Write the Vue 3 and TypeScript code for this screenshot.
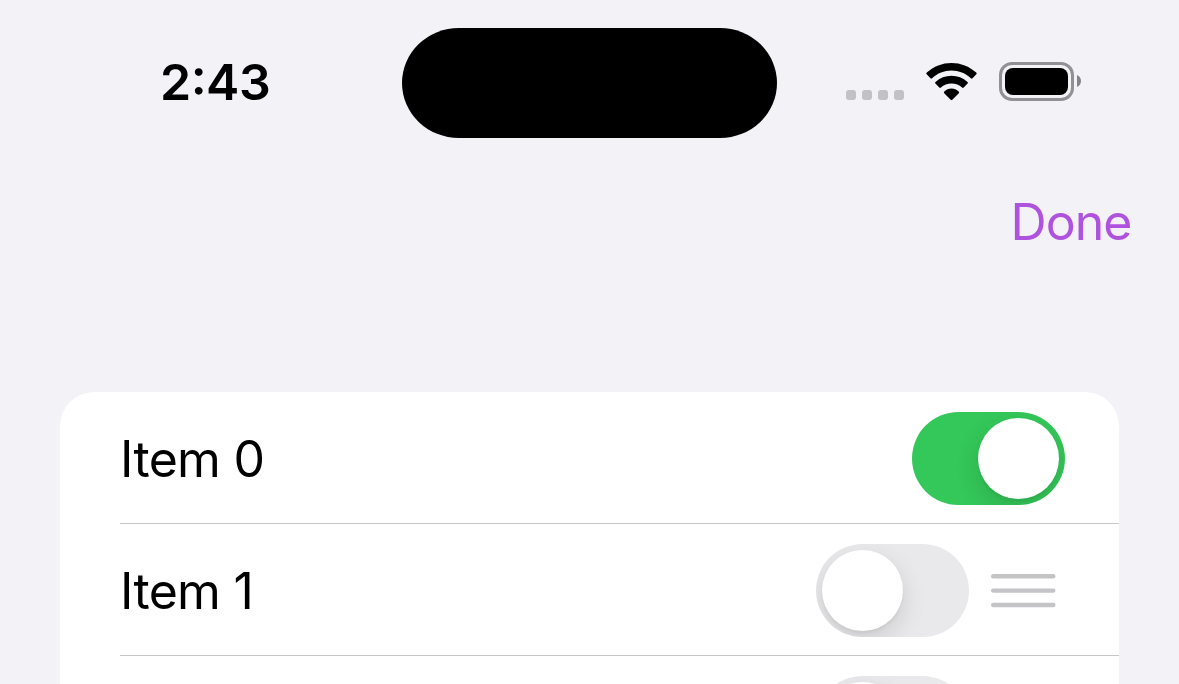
<script setup lang="ts">
import { ref } from 'vue'

interface Item {
  id: number
  label: string
  enabled: boolean
  movable: boolean
}

const items = ref<Item[]>([
  { id: 0, label: 'Item 0', enabled: true, movable: false },
  { id: 1, label: 'Item 1', enabled: false, movable: true },
  { id: 2, label: '', enabled: false, movable: true },
])
</script>

<template>
  <div class="screen">
    <header class="status">
      <div class="time">2:43</div>
      <div class="island" />
      <div class="indicators">
        <div class="signal">
          <i v-for="n in 4" :key="n" />
        </div>
        <svg class="wifi" viewBox="0 0 51 38" aria-hidden="true">
          <path d="M.8 9.6C7.6 3.3 16.2 0 25.5 0s17.9 3.3 24.7 9.6q.9.8.1 1.7l-3.8 3.9q-.8.8-1.6.1C39.6 10.4 32.8 7.6 25.5 7.6S11.4 10.4 6.1 15.3q-.8.7-1.6-.1L.7 11.3q-.8-.9.1-1.7z" />
          <path d="M9.5 18.9C13.9 14.9 19.4 12.7 25.5 12.7s11.6 2.2 16 6.2q.9.8.1 1.7l-3.9 3.9q-.8.8-1.6.1C33.2 22 29.6 20.5 25.5 20.5S17.8 22 14.9 24.6q-.8.7-1.6-.1l-3.9-3.9q-.8-.9.1-1.7z" />
          <path d="M18.3 28.5c2-1.9 4.5-2.9 7.2-2.9s5.2 1 7.2 2.9q.9.8.1 1.7l-6.5 6.6q-.8.8-1.6 0l-6.5-6.6q-.8-.9.1-1.7z" />
        </svg>
        <div class="battery">
          <div class="cell"><div class="charge" /></div>
          <svg class="nub" viewBox="0 0 4 12" aria-hidden="true">
            <path d="M0 0C2.4 1 4 3.3 4 6S2.4 11 0 12z" />
          </svg>
        </div>
      </div>
    </header>

    <nav class="toolbar">
      <button class="done" type="button">Done</button>
    </nav>

    <ul class="list">
      <li v-for="item in items" :key="item.id" class="row">
        <span class="label">{{ item.label }}</span>
        <button
          class="switch"
          :class="{ on: item.enabled }"
          type="button"
          role="switch"
          :aria-checked="item.enabled"
          @click="item.enabled = !item.enabled"
        >
          <span class="knob" />
        </button>
        <svg v-if="item.movable" class="handle" viewBox="0 0 65 34" aria-hidden="true">
          <path d="M2.2 2.3H62.3M2.2 16.6H62.3M2.2 31H62.3" />
        </svg>
      </li>
    </ul>
  </div>
</template>

<style>
body {
  margin: 0;
  background: #f2f2f7;
}
</style>

<style scoped>
.screen {
  box-sizing: border-box;
  height: 684px;
  overflow: hidden;
  background: #f2f2f7;
  color: #000;
  font-family: Inter, 'Liberation Sans', sans-serif;
  font-size: 50px;
}
button {
  margin: 0;
  padding: 0;
  border: 0;
  font: inherit;
}
.status {
  display: grid;
  grid-template-columns: 401.7px 375.5px 1fr;
  align-items: center;
  height: 165.5px;
}
.time {
  padding: 0 0 2px 160px;
  font-weight: 600;
  line-height: 60px;
  letter-spacing: -0.5px;
  font-feature-settings: 'case' 1, 'calt' 1;
}
.island {
  height: 110.5px;
  border-radius: 58px / 56px;
  background: #000;
}
.indicators {
  display: flex;
  align-items: center;
  height: 40px;
  padding: 0 0 2px 69px;
}
.signal {
  display: flex;
  align-self: flex-end;
  gap: 6px;
  margin: 0 22px 2px 0;
}
.signal i {
  width: 10px;
  height: 10px;
  border-radius: 3px;
  background: #c2c1c6;
}
.wifi {
  width: 51px;
  height: 38px;
  margin-right: 22px;
}
.battery {
  display: flex;
  align-items: center;
  gap: 3px;
}
.cell {
  box-sizing: border-box;
  width: 75px;
  height: 39px;
  padding: 3px;
  border: 3px solid #919195;
  border-radius: 13px;
}
.charge {
  height: 100%;
  border-radius: 8px;
  background: #000;
}
.nub {
  width: 4px;
  height: 12px;
  margin-bottom: 1px;
  fill: #858588;
}
.toolbar {
  display: flex;
  justify-content: flex-end;
  align-items: center;
  box-sizing: border-box;
  height: 114px;
  padding: 0 47.5px 2px 0;
}
.done {
  background: none;
  color: #af52de;
  line-height: 60px;
  letter-spacing: -0.95px;
}
.list {
  margin: 112.5px 60px 0;
  padding: 0;
  overflow: hidden;
  border-radius: 34px 34px 0 0;
  background: #fff;
  list-style: none;
}
.row {
  display: flex;
  align-items: center;
  box-sizing: border-box;
  height: 132px;
  margin-left: 60px;
  padding: 2px 54px 0 0;
  border-bottom: 1px solid #c6c6c8;
}
.label {
  flex: 1;
  line-height: 60px;
  letter-spacing: -0.7px;
}
.switch {
  box-sizing: border-box;
  display: flex;
  width: 153px;
  height: 93px;
  padding: 6px;
  overflow: hidden;
  border-radius: 47px;
  background: #e9e9eb;
}
.switch.on {
  justify-content: flex-end;
  background: #34c759;
}
.knob {
  width: 81px;
  height: 81px;
  border-radius: 50%;
  background: #fff;
  box-shadow: 0 9px 24px rgba(0, 0, 0, 0.13), 0 3px 3px rgba(0, 0, 0, 0.04);
}
.handle {
  width: 65px;
  height: 34px;
  margin: 0 9px 0 22px;
  fill: none;
  stroke: #c4c4c6;
  stroke-width: 4.4;
  stroke-linecap: round;
}
</style>
